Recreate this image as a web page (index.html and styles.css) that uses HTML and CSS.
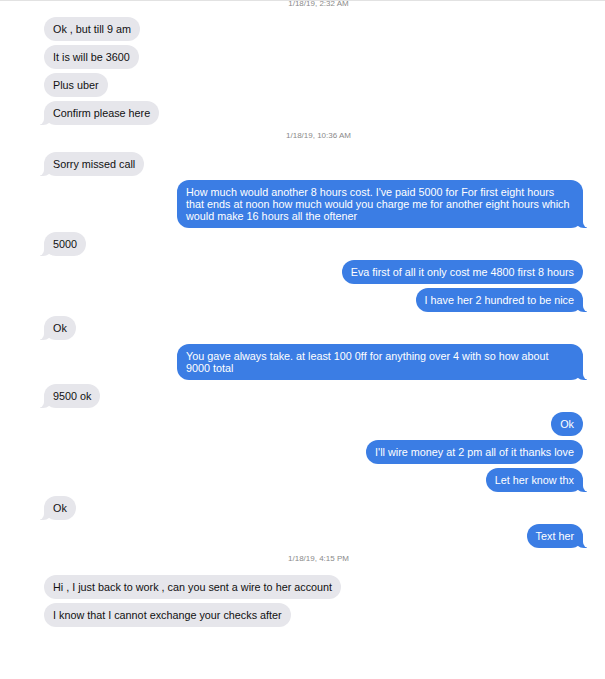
FILE: index.html
```html
<!DOCTYPE html>
<html lang="en">
  <head>
    <meta charset="UTF-8" />
    <meta name="viewport" content="width=device-width, initial-scale=1.0" />
    <title>Messages</title>
    <link rel="stylesheet" href="styles.css">
  </head>
  <body>
    <div class="thread">
      <div class="stamp first">1/18/19, 2:32 AM</div>
      <div class="msg in">Ok , but till 9 am</div>
      <div class="msg in">It is will be 3600</div>
      <div class="msg in">Plus uber</div>
      <div class="msg in tail">Confirm please here</div>

      <div class="stamp">1/18/19, 10:36 AM</div>
      <div class="msg in tail">Sorry missed call</div>
      <div class="msg out tail">How much would another 8 hours cost. I've paid 5000 for For first eight hours that ends at noon how much would you charge me for another eight hours which would make 16 hours all the oftener</div>
      <div class="msg in tail">5000</div>
      <div class="msg out">Eva first of all it only cost me 4800 first 8 hours</div>
      <div class="msg out tail">I have her 2 hundred to be nice</div>
      <div class="msg in tail">Ok</div>
      <div class="msg out tail">You gave always take. at least 100 0ff for anything over 4 with so how about 9000 total</div>
      <div class="msg in tail">9500 ok</div>
      <div class="msg out">Ok</div>
      <div class="msg out">I'll wire money at 2 pm all of it thanks love</div>
      <div class="msg out tail">Let her know thx</div>
      <div class="msg in tail">Ok</div>
      <div class="msg out tail">Text her</div>

      <div class="stamp">1/18/19, 4:15 PM</div>
      <div class="msg in">Hi , I just back to work , can you sent a wire to her account</div>
      <div class="msg in">I know that I cannot exchange your checks after</div>
    </div>
  </body>
</html>
```

FILE: styles.css
```css
* {
  margin: 0;
  padding: 0;
  box-sizing: border-box;
}

body {
  font-family: "Liberation Sans", Arial, sans-serif;
  background-color: #fff;
  border-top: 1px solid #e2e2e2;
}

.thread {
  display: flex;
  flex-direction: column;
  gap: 4px;
  padding: 0 22px 40px 44px;
}

/* timestamps */
.stamp {
  align-self: center;
  font-size: 8px;
  line-height: 10px;
  color: #8a8a8a;
  margin: 2px 0 7px 10px;
}

.stamp.first {
  margin-top: -2px;
  margin-bottom: 4px;
}

/* bubbles */
.msg {
  position: relative;
  max-width: 406px;
  font-size: 10.8px;
  line-height: 12px;
  padding: 6px 9px;
  border-radius: 12px;
}

.msg.in {
  align-self: flex-start;
  background-color: #e6e6eb;
  color: #111;
}

.msg.out {
  align-self: flex-end;
  background-color: #3b7de4;
  color: #fff;
}

/* little tails on the last bubble of a run */
.msg.tail::before,
.msg.tail::after {
  content: "";
  position: absolute;
  bottom: 0;
  height: 12px;
}

.msg.in.tail::before {
  left: -4px;
  width: 12px;
  background-color: #e6e6eb;
  border-bottom-right-radius: 9px 8px;
}

.msg.in.tail::after {
  left: -10px;
  width: 10px;
  background-color: #fff;
  border-bottom-right-radius: 6px;
}

.msg.out.tail::before {
  right: -4px;
  width: 12px;
  background-color: #3b7de4;
  border-bottom-left-radius: 9px 8px;
}

.msg.out.tail::after {
  right: -10px;
  width: 10px;
  background-color: #fff;
  border-bottom-left-radius: 6px;
}
```
